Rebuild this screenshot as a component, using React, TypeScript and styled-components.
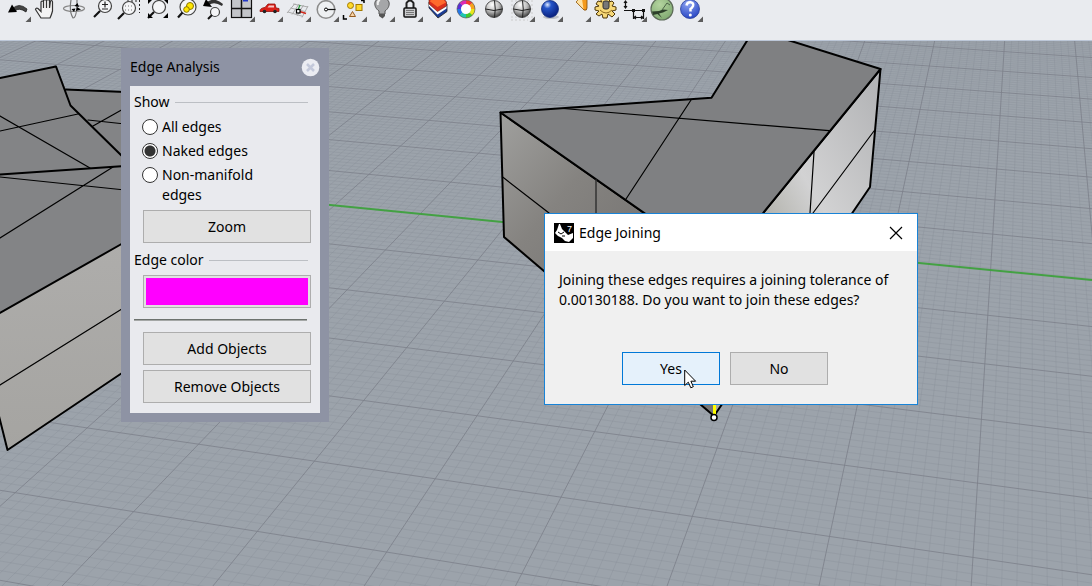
import React, { ReactNode } from 'react';
import styled, { createGlobalStyle } from 'styled-components';

const GlobalStyle = createGlobalStyle`
  * { box-sizing: border-box; }
  body {
    margin: 0;
    color: #000;
    font-family: "Noto Sans", "Open Sans", sans-serif;
    font-size: 14px;
    line-height: 20px;
  }
  button { font: inherit; color: inherit; padding: 0; }
`;

const Shell = styled.div`
  display: flex;
  flex-direction: column;
  min-height: 100vh;
`;

const Toolbar = styled.header`
  display: flex;
  align-items: flex-start;
  padding: 0 4px 17px;
  background: #e9ebef;
  border-bottom: 1px solid #bcc7d8;
  overflow: hidden;
`;

const ToolButton = styled.button`
  flex: none;
  width: 28px;
  height: 23px;
  border: 0;
  background: none;

  svg { display: block; }
`;

const Viewport = styled.main`
  position: relative;
  flex: 1;
  background: #9ca3ab;
  overflow: hidden;
`;

const Scene = styled.svg`
  position: absolute;
  inset: 0;
  width: 100%;
  height: 100%;
`;

/* ---------- Edge Analysis palette ---------- */

const Palette = styled.section`
  position: absolute;
  left: 121px;
  top: 7px;
  width: 208px;
  padding: 0 9px 9px;
  background: #8e93a4;
`;

const PaletteTitle = styled.header`
  display: flex;
  align-items: center;
  justify-content: space-between;
  height: 38px;

  h2 { margin: 0; font: inherit; }
`;

const RoundClose = styled.button`
  width: 19px;
  height: 19px;
  border: 0;
  background: none;

  svg { display: block; }
`;

const PaletteBody = styled.div`
  padding: 6px 9px 10px 4px;
  background: #e9eaee;
`;

const Group = styled.fieldset`
  margin: 0;
  padding: 0;
  border: 0;
  min-width: 0;
`;

const GroupHeading = styled.div`
  display: flex;
  align-items: center;
  gap: 5px;
  padding-right: 3px;

  &::after {
    content: "";
    flex: 1;
    height: 1px;
    background: #bcbfc4;
  }
`;

const RadioList = styled.div`
  display: flex;
  flex-direction: column;
  gap: 4px;
  padding: 5px 32px 5px 8px;
`;

const RadioLabel = styled.label`
  display: flex;
  align-items: flex-start;
  gap: 4px;
`;

const Radio = styled.input`
  appearance: none;
  flex: none;
  width: 16px;
  height: 16px;
  margin: 2px 0 0;
  border: 1px solid #333;
  border-radius: 50%;
  background: #fff;

  &:checked {
    background: radial-gradient(circle, #333 0 5px, #fff 6px);
  }
`;

const PushButton = styled.button<{ $active?: boolean }>`
  height: 33px;
  border: 1px solid ${p => (p.$active ? '#0078d7' : '#adadad')};
  background: ${p => (p.$active ? '#e5f1fb' : '#e1e1e1')};
`;

const ButtonStack = styled.div`
  display: flex;
  flex-direction: column;
  gap: 5px;
  padding-left: 9px;
`;

const ColorGroup = styled(Group)`
  padding-top: 7px;
`;

const ColorButton = styled(PushButton)`
  display: block;
  width: calc(100% - 9px);
  margin: 5px 0 0 9px;
  padding: 2px;
`;

const Swatch = styled.span`
  display: block;
  height: 100%;
  background: #ff00ff;
`;

const Separator = styled.hr`
  height: 2px;
  margin: 11px 4px 11px 0;
  border: 0;
  border-top: 1px solid #6d726e;
  background: #a4a7a6;
`;

/* ---------- Edge Joining dialog ---------- */

const Dialog = styled.section`
  position: absolute;
  left: 544px;
  top: 172px;
  width: 374px;
  border: 1px solid #1883d7;
  background: #f0f0f0;
`;

const DialogTitle = styled.header`
  display: flex;
  align-items: center;
  gap: 5px;
  height: 37px;
  padding: 0 14px 0 9px;
  background: #fff;

  h2 { flex: 1; margin: 0; font: inherit; }
`;

const CloseButton = styled.button`
  width: 14px;
  height: 14px;
  border: 0;
  background: none;

  svg { display: block; }
`;

const Message = styled.p`
  margin: 0;
  padding: 19px 14px 0;
`;

const DialogActions = styled.div`
  display: flex;
  justify-content: center;
  gap: 10px;
  padding: 42px 24px 19px 12px;

  button { width: 98px; }
`;

const Pointer = styled.svg`
  position: absolute;
  left: 684px;
  top: 328px;
  pointer-events: none;
`;

/* ---------- Construction plane grid in perspective ---------- */

type Pt = [number, number];

// Screen positions of four grid nodes, (column, row) = (-6,-9) (0,-9) (0,1) (-6,1).
const Q: Pt[] = [[548.3, 80.7], [1000, 115.7], [972.9, 557.4], [198.5, 444.2]];

const makeProjector = () => {
  const [[x0, y0], [x1, y1], [x2, y2], [x3, y3]] = Q;
  const sx = x0 - x1 + x2 - x3;
  const sy = y0 - y1 + y2 - y3;
  const dx1 = x1 - x2, dx2 = x3 - x2, dy1 = y1 - y2, dy2 = y3 - y2;
  const det = dx1 * dy2 - dx2 * dy1;
  const g = (sx * dy2 - dx2 * sy) / det;
  const h = (dx1 * sy - sx * dy1) / det;
  const a = x1 - x0 + g * x1, b = x3 - x0 + h * x3;
  const d = y1 - y0 + g * y1, e = y3 - y0 + h * y3;
  return (col: number, row: number): Pt | null => {
    const s = (col + 6) / 6;
    const t = (row + 9) / 10;
    const w = g * s + h * t + 1;
    if (w < 0.08) return null;
    return [(a * s + b * t + x0) / w, (d * s + e * t + y0) / w];
  };
};

const project = makeProjector();
const COLS: Pt = [-20, 5];
const ROWS: Pt = [-20, 8];

const segment = (along: (k: number) => Pt | null, from: number, to: number) => {
  const pts: Pt[] = [];
  for (let k = from; k <= to; k += 1) {
    const p = along(k);
    if (p) pts.push(p);
  }
  if (pts.length < 2) return '';
  const f = pts[0], l = pts[pts.length - 1];
  return `M${f[0].toFixed(1)} ${f[1].toFixed(1)}L${l[0].toFixed(1)} ${l[1].toFixed(1)}`;
};

const gridPath = (minor: boolean) => {
  let d = '';
  for (let i = COLS[0] * 10; i <= COLS[1] * 10; i++) {
    if ((i % 10 !== 0) === minor) d += segment(k => project(i / 10, k), ROWS[0], ROWS[1]);
  }
  for (let i = ROWS[0] * 10; i <= ROWS[1] * 10; i++) {
    if (i === -40) continue;
    if ((i % 10 !== 0) === minor) d += segment(k => project(k, i / 10), COLS[0], COLS[1]);
  }
  return d;
};

const minorGrid = gridPath(true);
const majorGrid = gridPath(false);

const ModelScene = () => (
  <Scene viewBox="0 41 1092 545" preserveAspectRatio="xMinYMin slice" aria-hidden="true">
    <defs>
      <linearGradient id="leftFace" x1="0" y1="0" x2=".5" y2=".6">
        <stop offset="0" stopColor="#a0a09e" /><stop offset=".5" stopColor="#858380" /><stop offset="1" stopColor="#777573" />
      </linearGradient>
      <linearGradient id="rightFace" x1=".9" y1="0" x2=".4" y2=".6">
        <stop offset="0" stopColor="#b4b5b7" /><stop offset=".6" stopColor="#d2d2d3" /><stop offset="1" stopColor="#a9a9a0" />
      </linearGradient>
      <linearGradient id="wall" x1="0" y1="0" x2="0" y2="1">
        <stop offset="0" stopColor="#aeadab" /><stop offset="1" stopColor="#a5a4a1" />
      </linearGradient>
    </defs>
    <path d={minorGrid} stroke="#858c96" strokeOpacity=".3" fill="none" />
    <path d={majorGrid} stroke="#7c8089" strokeOpacity=".8" fill="none" />
    <path d="M320 204L1092 280" stroke="#43a143" strokeWidth="2" />

    <g stroke="#000" strokeLinejoin="round" strokeLinecap="round">
      <g stroke="none">
        <path d="M0 78L56 66.500L66 89.500L125 92V242L0 313Z" fill="#838486" />
        <path d="M0 313L125 242V371L8 450L0 419Z" fill="url(#wall)" />
      </g>
      <path d="M0 78L56 66.500L70.500 105.500L125 159M66 89.500L125 92M0 174.500L125 166M0 313L125 242M-1 416L7.500 450L125 371" fill="none" strokeWidth="2" />
      <path d="M0 131L78 114M0 116L90 168M93 126L125 108M88 120L125 124M0 177L125 190M113 167L0 238M0 385L125 307" fill="none" strokeWidth="1.200" />
    </g>

    <g stroke="#000" strokeLinejoin="round" strokeLinecap="round">
      <path d="M500.500 112.500L720 266L714 416L504 237Z" fill="url(#leftFace)" strokeWidth="2" />
      <path d="M720 266L880.500 69L870 187L714 416Z" fill="url(#rightFace)" strokeWidth="2" />
      <path d="M500.500 112.500L711.500 97.700L750 36L775 36L880.500 69L720 266Z" fill="#7f8082" strokeWidth="2" />
      <path d="M563 108.500L829 130.700M691 100L626 199M503 177.300L549 213M814 152L810 213M874 131L813 213" fill="none" strokeWidth="1.200" />
      <path d="M596 180V213" stroke="#333" strokeWidth="1.500" />
      <path d="M714.500 400V415" stroke="#ffff00" strokeWidth="3" />
      <circle cx="714" cy="417.500" r="3" fill="#fff" strokeWidth="1.500" />
    </g>
  </Scene>
);

/* ---------- Toolbar icons ---------- */

const Lens = ({ x = 15, y = 6 }: { x?: number; y?: number }) => (
  <>
    <circle cx={x} cy={y} r="6.500" fill="#f4f5f7" stroke="#444" strokeWidth="1.200" />
    <path d={`M${x - 5} ${y + 5}L${x - 11} ${y + 11}`} stroke="#111" strokeWidth="2.200" />
  </>
);

const Ball = ({ fill }: { fill: string }) => (
  <>
    <circle cx="14" cy="9" r="8.500" fill={fill} stroke="#333" strokeWidth=".8" />
    <path d="M14.500 0.500Q16 9 14.500 17.500M5.500 9Q14 12 22.500 9" fill="none" stroke="#222" strokeWidth="1" />
  </>
);

interface Tool { name: string; menu?: boolean; art: ReactNode }

const tools: Tool[] = [
  { name: 'Undo', menu: true, art: <><path d="M8 9Q15 2 23 9L22 12Q15 7 11 11Z" fill="#444" stroke="#222" strokeWidth=".8" /><path d="M4 12.500L8 4.500L13 12Z" fill="#000" /></> },
  { name: 'Pan', art: <path d="M9 18L3.500 9.500Q4 7.500 6 8.500L9 11.500V2Q10 0 11.500 2V8V0H14.500V8V0H17.500V8L18.500 1Q20.500 0 20.500 2V11Q19.500 15 18 18Z" fill="#f3f3f3" stroke="#333" strokeWidth="1.200" /> },
  { name: 'Rotate view', art: <><ellipse cx="14" cy="8.500" rx="10.500" ry="3" fill="none" stroke="#888" strokeWidth="1.200" /><path d="M11 0Q9 12 13 18Q17 18 17 0" fill="none" stroke="#777" strokeWidth="1.200" /><path d="M14.500 6L17.500 3L19 7ZM17 7L16 11L21 9.500ZM11.500 9L15.500 8.500L14 12Z" fill="#000" /></> },
  { name: 'Zoom dynamic', art: <><Lens x={17} /><path d="M14 4.500H20M17 1.500V7.500M14 9H20" stroke="#222" strokeWidth="1.200" /></> },
  { name: 'Zoom window', art: <><path d="M11 1H23M23.500 0V13" stroke="#222" strokeDasharray="2 2" fill="none" /><Lens x={13} y={8} /><path d="M9 6H17M9 10H17" stroke="#777" strokeDasharray="1 2" /></> },
  { name: 'Zoom extents', art: <><Lens x={15} y={7} /><path d="M4 13V18H9M19 18H24V13" fill="#000" /><path d="M4 4V0H8ZM20 0H24V4Z" fill="#000" /></> },
  { name: 'Zoom selected', art: <><circle cx="16" cy="7" r="8" fill="#f4f5f7" stroke="#444" strokeWidth="1.200" /><path d="M10.500 12.500L6 17.500" stroke="#111" strokeWidth="2.200" /><circle cx="18" cy="6" r="3.500" fill="#ffe600" stroke="#8a7600" /><circle cx="14.500" cy="9.500" r="2.800" fill="#ffe600" stroke="#8a7600" /></> },
  { name: 'Undo view change', menu: true, art: <><path d="M6 3Q14 -4 23 4L22 6Q14 1 9 5Z" fill="#333" /><path d="M3 6L6 -1L12 7Z" fill="#000" /><circle cx="15" cy="12" r="4.500" fill="#f4f5f7" stroke="#444" strokeWidth="1.200" /><path d="M12 15L8 19" stroke="#111" strokeWidth="2" /></> },
  { name: 'Four viewports', menu: true, art: <><rect x="3.500" y="-2" width="20" height="19.500" fill="#c3c5c9" stroke="#111" strokeWidth="1.200" /><path d="M13.500 0V17.500M3.500 8.500H23.500" stroke="#111" strokeWidth="1.500" /><path d="M15 .5H20" stroke="#2338c8" strokeWidth="2" /></> },
  { name: 'Right view', menu: true, art: <><path d="M4 11Q4 8 9 7.500L12 4H19L20 8L23 8.500V11.500H4Z" fill="#dc2018" stroke="#8f100b" strokeWidth=".8" /><path d="M13 5.500H18V7.500H11.500Z" fill="#f4c9c7" /><circle cx="8.500" cy="11.500" r="1.800" fill="#222" /><circle cx="19" cy="11.500" r="1.800" fill="#222" /></> },
  { name: 'Set CPlane', menu: true, art: <><path d="M9 4L24 7M6.500 8L21 11.500M4 12L19 16.500M11 3.500L3 13M15 4L8 14.500M19.500 5L13 16M24 6L18 17.500" stroke="#aaa" fill="none" /><path d="M14 10L16 5" stroke="#279b38" strokeWidth="1.300" /><path d="M14 11L22 13.500" stroke="#d32a1e" strokeWidth="1.500" /><rect x="12.500" y="9.500" width="3.500" height="3.500" fill="#fff" stroke="#000" strokeWidth="1.200" /></> },
  { name: 'Radius snap', menu: true, art: <><circle cx="14" cy="9.500" r="8.800" fill="#eef0f2" stroke="#8c8c8c" strokeWidth="1.500" /><path d="M14 9.500H23.500" stroke="#111" strokeWidth="1.200" /><circle cx="14" cy="9.500" r="1.500" fill="#fff" stroke="#000" /></> },
  { name: 'Select', menu: true, art: <><circle cx="10.500" cy="5.500" r="3" fill="#ffd92a" stroke="#a27900" /><rect x="16" y="4.500" width="6" height="6" fill="#ffd92a" stroke="#a27900" /><path d="M12.500 11.500L15.500 16.500H9.500Z" fill="#f8d4a8" stroke="#945b1f" /><path d="M3.500 15V19H7M21 .5H24V3" fill="none" stroke="#000" strokeWidth="1.500" /></> },
  { name: 'Hide', menu: true, art: <><path d="M14 -2C5 -2 5 7 11 11V14H17V11C23 7 23 -2 14 -2Z" fill="#a5a6a8" stroke="#555" /><path d="M10 5Q9 1 12 0" stroke="#eee" strokeWidth="2" fill="none" /><path d="M11 14H17V16L14.500 18.500L11 16Z" fill="#555" /></> },
  { name: 'Lock', menu: true, art: <><path d="M10.500 8V3Q14 -2 17.500 3V8" fill="none" stroke="#222" strokeWidth="2" /><rect x="8" y="8" width="12" height="9" rx="1" fill="#c9cacc" stroke="#111" strokeWidth="1.500" /><path d="M10 10.500H18M10 12.500H18M10 14.500H18" stroke="#777" /></> },
  { name: 'Layers', menu: true, art: <><path d="M5 2V8L14 18L23 11.500V4L14 8Z" fill="#1c3d94" stroke="#222" strokeWidth=".8" /><path d="M5 2V6L13.500 14.500L22.500 8.500V4L14 8Z" fill="#fff" /><path d="M5 0V4L13.500 11.500L22.500 6V2L20 -1H6Z" fill="#d92f1c" stroke="#5c170c" strokeWidth=".6" /><path d="M5.500 1L9 -1H19L22 2.500L13.500 7Z" fill="#ff6a2c" /></> },
  {
    name: 'Color wheel', menu: true, art: <>{['#f43b2f', '#f7a41c', '#e8e61c', '#45c92d', '#1fc7b0', '#2377e8', '#5b2fd6', '#dc2bb4'].map((c, i) => (
      <circle key={c} cx="14" cy="9" r="7" fill="none" stroke={c} strokeWidth="4" strokeDasharray="5.7 38.4" transform={`rotate(${i * 45 - 90} 14 9)`} />
    ))}<circle cx="14" cy="9" r="4.800" fill="#fff" /><circle cx="14" cy="9" r="9" fill="none" stroke="#444" strokeWidth=".6" /></>,
  },
  { name: 'Shaded', art: <Ball fill="url(#ballGrey)" /> },
  { name: 'Shade selected', menu: true, art: <><path d="M3 1H25M3 5H25M3 9H25M3 13H25M3 17H25M3 20H20" stroke="#ccc" strokeDasharray="2 2" /><Ball fill="url(#ballGrey)" /></> },
  { name: 'Render', menu: true, art: <><ellipse cx="15" cy="17" rx="8" ry="2" fill="#bfc2c8" /><circle cx="14" cy="9" r="8.500" fill="url(#ballBlue)" stroke="#102c7d" strokeWidth=".8" /></> },
  { name: 'Spotlight', menu: true, art: <><path d="M12 2L20 10Q23 11 23 8V-1H15Z" fill="#f59a1b" stroke="#7e4a06" strokeWidth=".8" /><path d="M12.500 2L19.500 9L18 -1H15Z" fill="#ffe2a3" /></> },
  { name: 'Options', menu: true, art: <><path d="M8 -1L10 2L6 1L4 4L7 6L3 7V10L7 11L4 14L7 16L10 14L11 18H15L16 14L20 17L23 14L20 11L24 10V7L20 6L22 3L20 1L17 2L18 -1Z" fill="#f7d877" stroke="#4d3608" /><path d="M8 10Q14 16 20 10" stroke="#8d6820" fill="none" /><rect x="11" y="1" width="6" height="8" rx="2" fill="#777" stroke="#333" /></> },
  { name: 'Dimensions', menu: true, art: <><path d="M5.500 1V8M4 3L5.500 1L7 3M4 6L5.500 8L7 6M4 10.500H22M13.500 10V19M23.500 10V19M14 17.500H23M16 16L14 17.500L16 19M21 16L23 17.500L21 19" fill="none" stroke="#111" strokeWidth="1.200" /><path d="M12 9H15V12H12ZM22 9H25V12H22Z" fill="#111" /></> },
  { name: 'Grasshopper', art: <><circle cx="14" cy="9" r="11" fill="url(#ballGreen)" stroke="#5d6b58" strokeWidth="1.200" /><path d="M4 11.500L11 11L15 9.500L20 10L15 12.500L11 13.500L14 18L9.500 14L5 15Z" fill="#2c3f2a" /><path d="M14 10L19 3L22 5" stroke="#4c6547" /></> },
  { name: 'Help', menu: true, art: <><circle cx="14" cy="9" r="9.500" fill="url(#ballHelp)" stroke="#2a3f9b" strokeWidth=".8" /><path d="M10.500 5.500Q11 2 14.500 2.200Q18 3 17 6Q16 8 14.500 9V11.500" fill="none" stroke="#fff" strokeWidth="2.500" /><circle cx="14.300" cy="15" r="1.500" fill="#fff" /></> },
];

const SharedGradients = () => (
  <defs>
    <radialGradient id="ballGrey" cx=".4" cy=".25" r=".8"><stop offset="0" stopColor="#fff" /><stop offset=".5" stopColor="#bdbdbd" /><stop offset="1" stopColor="#333" /></radialGradient>
    <radialGradient id="ballBlue" cx=".35" cy=".25" r=".75"><stop offset="0" stopColor="#dfeaff" /><stop offset=".3" stopColor="#2555c8" /><stop offset="1" stopColor="#0a2180" /></radialGradient>
    <radialGradient id="ballGreen" cx=".4" cy=".3" r=".8"><stop offset="0" stopColor="#b4d49f" /><stop offset="1" stopColor="#7aa56c" /></radialGradient>
    <radialGradient id="ballHelp" cx=".4" cy=".2" r=".8"><stop offset="0" stopColor="#90a6f2" /><stop offset="1" stopColor="#2a48c4" /></radialGradient>
  </defs>
);

const LogoDigit = styled.text`
  fill: #fff;
  font: 9px/1 "Liberation Sans", sans-serif;
`;

const RhinoLogo = () => (
  <svg width="20" height="20" viewBox="0 0 20 20" aria-hidden="true">
    <rect width="20" height="20" fill="#000" />
    <path d="M5 1L3 7L1 10L4 13L8 15L11 18L15 19L19 15V10L14 12L10 8L8 6L6 1Z" fill="#fff" />
    <path d="M4 9L7 11L10 9M11 13L8 13" fill="none" stroke="#000" />
    <LogoDigit x="13" y="9">7</LogoDigit>
  </svg>
);

const edgeKinds = ['All edges', 'Naked edges', 'Non-manifold edges'];

export default function App() {
  return (
    <Shell>
      <GlobalStyle />
      <Toolbar>
        {tools.map((tool, i) => (
          <ToolButton key={tool.name} type="button" aria-label={tool.name}>
            <svg width="28" height="23" viewBox="0 0 28 23" fill="none" aria-hidden="true">
              {i === 0 && <SharedGradients />}
              {tool.art}
              {tool.menu && <path d="M27 16.500V22H21.500Z" fill="#5c5c5c" />}
            </svg>
          </ToolButton>
        ))}
      </Toolbar>
      <Viewport>
        <ModelScene />

        <Palette aria-label="Edge Analysis">
          <PaletteTitle>
            <h2>Edge Analysis</h2>
            <RoundClose type="button" aria-label="Close palette">
              <svg width="19" height="19" viewBox="0 0 19 19" aria-hidden="true">
                <circle cx="9.500" cy="9.500" r="8.800" fill="#ebecf2" />
                <path d="M6 6L13 13M13 6L6 13" stroke="#c3c8da" strokeWidth="2.500" />
              </svg>
            </RoundClose>
          </PaletteTitle>
          <PaletteBody>
            <Group aria-labelledby="show-heading">
              <GroupHeading id="show-heading">Show</GroupHeading>
              <RadioList>
                {edgeKinds.map((kind, i) => (
                  <RadioLabel key={kind}>
                    <Radio type="radio" name="edges" defaultChecked={i === 1} />
                    <span>{kind}</span>
                  </RadioLabel>
                ))}
              </RadioList>
              <ButtonStack>
                <PushButton type="button">Zoom</PushButton>
              </ButtonStack>
            </Group>
            <ColorGroup aria-labelledby="color-heading">
              <GroupHeading id="color-heading">Edge color</GroupHeading>
              <ColorButton type="button" aria-label="Choose edge color"><Swatch /></ColorButton>
            </ColorGroup>
            <Separator />
            <ButtonStack>
              <PushButton type="button">Add Objects</PushButton>
              <PushButton type="button">Remove Objects</PushButton>
            </ButtonStack>
          </PaletteBody>
        </Palette>

        <Dialog role="dialog" aria-labelledby="join-title">
          <DialogTitle>
            <RhinoLogo />
            <h2 id="join-title">Edge Joining</h2>
            <CloseButton type="button" aria-label="Close dialog">
              <svg width="14" height="14" viewBox="0 0 14 14" aria-hidden="true">
                <path d="M1 1L13 13M13 1L1 13" stroke="#000" strokeWidth="1.200" />
              </svg>
            </CloseButton>
          </DialogTitle>
          <Message>
            Joining these edges requires a joining tolerance of 0.00130188. Do you want to join these edges?
          </Message>
          <DialogActions>
            <PushButton type="button" $active>Yes</PushButton>
            <PushButton type="button">No</PushButton>
          </DialogActions>
        </Dialog>

        <Pointer width="13" height="20" viewBox="0 0 13 20" aria-hidden="true">
          <path d="M.7 1V16.500L4.300 13.200L6.800 18.800L9.300 17.700L6.900 12.200H11.600Z" fill="#fff" stroke="#000" />
        </Pointer>
      </Viewport>
    </Shell>
  );
}
